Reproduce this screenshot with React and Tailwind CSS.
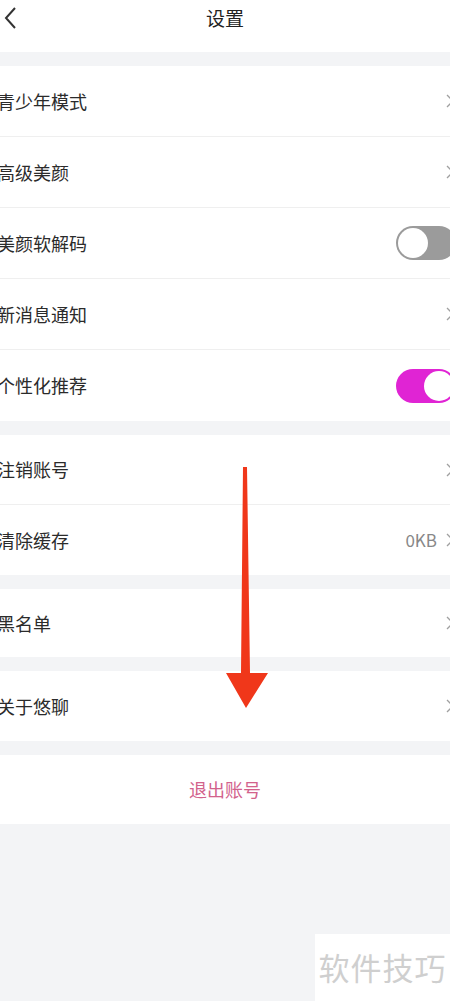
const font = { fontFamily: '"Noto Sans CJK SC", "Noto Sans", sans-serif' };

const Chevron = () => (
    <svg width="10" height="16" viewBox="0 0 10 16" className="shrink-0 -mr-[5px]">
        <path d="M2 2l6 6-6 6" fill="none" stroke="#a0a0a0" strokeWidth="1.3" />
    </svg>
);

const Toggle = ({ on }) =>
    on ? (
        <div className="w-[60px] h-[34px] rounded-full bg-[#e024d4] flex items-center justify-end pr-[2px] shrink-0 -mr-[6px]">
            <div className="w-[30px] h-[30px] rounded-full bg-white" />
        </div>
    ) : (
        <div className="w-[60px] h-[34px] rounded-full bg-[#9b9b9b] flex items-center pl-[2px] shrink-0 -mr-[6px]">
            <div className="w-[30px] h-[30px] rounded-full bg-white" />
        </div>
    );

const Row = ({ label, right, h = "h-[71px]", last }) => (
    <div className={`${h} flex items-center justify-between bg-white ${last ? "" : "border-b border-[#efefef]"}`}>
        <span className="text-[18px] text-[#2b2b2b] -ml-[3px]">{label}</span>
        <div className="flex items-center gap-2">{right || <Chevron />}</div>
    </div>
);

const Gap = () => <div className="h-[14px] bg-[#f3f4f6]" />;

export default function App() {
    return (
        <div className="relative w-[450px] h-[1001px] bg-[#f3f4f6] overflow-hidden" style={font}>
            <div className="h-[52px] bg-white relative flex items-center justify-center">
                <svg width="14" height="24" viewBox="0 0 14 24" className="absolute left-[4px] top-[6px]">
                    <path d="M11 2L2 12l9 10" fill="none" stroke="#333" strokeWidth="2" />
                </svg>
                <span className="text-[19px] text-[#222] -mt-[16px]">设置</span>
            </div>
            <Gap />
            <Row label="青少年模式" />
            <Row label="高级美颜" />
            <Row label="美颜软解码" right={<Toggle />} />
            <Row label="新消息通知" />
            <Row label="个性化推荐" right={<Toggle on />} last />
            <Gap />
            <Row label="注销账号" h="h-[70px]" />
            <Row
                label="清除缓存"
                h="h-[70px]"
                last
                right={
                    <>
                        <span className="text-[17px] text-[#888]">0KB</span>
                        <Chevron />
                    </>
                }
            />
            <Gap />
            <Row label="黑名单" h="h-[68px]" last />
            <Gap />
            <Row label="关于悠聊" h="h-[70px]" last />
            <Gap />
            <div className="h-[69px] bg-white flex items-center justify-center">
                <span className="text-[18px] text-[#d2628c]">退出账号</span>
            </div>

            <svg width="60" height="250" viewBox="0 0 60 250" className="absolute left-[217px] top-[465px]">
                <polygon points="26,2 30,2 33,208 51,208 29,243 9,208 24,208" fill="#f0371a" />
            </svg>

            <div className="absolute left-[315px] top-[934px] w-[135px] h-[67px] bg-white flex items-center justify-center">
                <span className="text-[31px] text-[#cfcfcf] tracking-[1px]">软件技巧</span>
            </div>
        </div>
    );
}
